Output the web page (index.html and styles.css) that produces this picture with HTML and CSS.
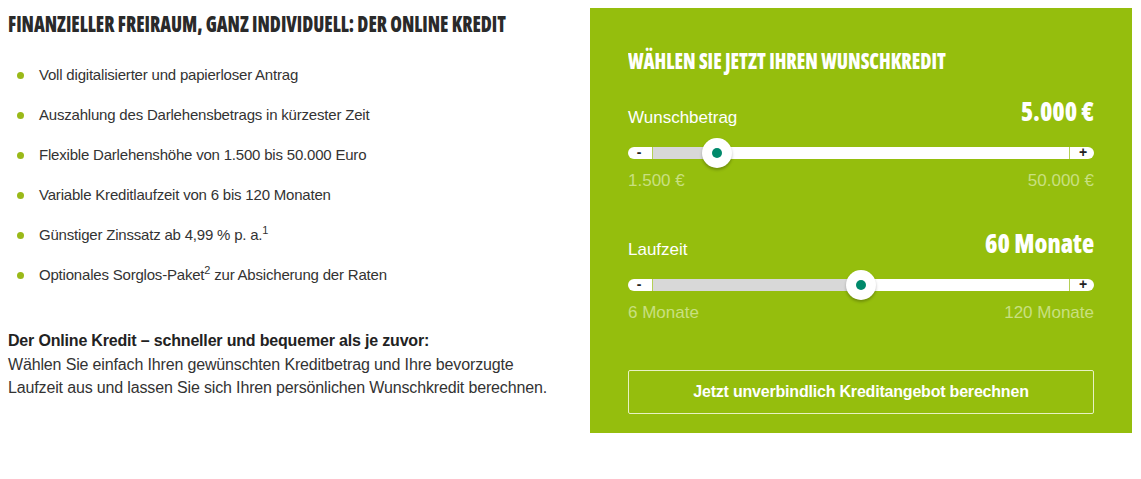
FILE: index.html
```html
<!DOCTYPE html>
<html lang="de">
<head>
<meta charset="utf-8">
<title>Online Kredit</title>
<link rel="stylesheet" href="styles.css">
</head>
<body>
<div class="page">
  <section class="info">
    <h1 class="headline"><span class="squeeze squeeze-left">Finanzieller Freiraum, ganz individuell: Der Online Kredit</span></h1>
    <ul class="benefits">
      <li>Voll digitalisierter und papierloser Antrag</li>
      <li>Auszahlung des Darlehensbetrags in kürzester Zeit</li>
      <li>Flexible Darlehenshöhe von 1.500 bis 50.000 Euro</li>
      <li>Variable Kreditlaufzeit von 6 bis 120 Monaten</li>
      <li>Günstiger Zinssatz ab 4,99 % p. a.<sup>1</sup></li>
      <li>Optionales Sorglos-Paket<sup>2</sup> zur Absicherung der Raten</li>
    </ul>
    <p class="intro"><strong>Der Online Kredit – schneller und bequemer als je zuvor:</strong><br>Wählen Sie einfach Ihren gewünschten Kreditbetrag und Ihre bevorzugte Laufzeit aus und lassen Sie sich Ihren persönlichen Wunschkredit berechnen.</p>
  </section>
  <aside class="calc">
    <h2 class="calc-title"><span class="squeeze squeeze-left squeeze-title">Wählen Sie jetzt Ihren Wunschkredit</span></h2>
    <div class="field field-amount">
      <div class="field-head">
        <span class="field-label">Wunschbetrag</span>
        <span class="field-value"><span class="squeeze squeeze-right">5.000 €</span></span>
      </div>
      <div class="slider">
        <span class="step step-minus">-</span>
        <div class="rail">
          <div class="fill" style="width: 15.4%"></div>
          <span class="thumb" style="left: 15.4%"></span>
        </div>
        <span class="step step-plus">+</span>
      </div>
      <div class="range"><span>1.500 €</span><span>50.000 €</span></div>
    </div>
    <div class="field field-term">
      <div class="field-head">
        <span class="field-label">Laufzeit</span>
        <span class="field-value"><span class="squeeze squeeze-right">60 Monate</span></span>
      </div>
      <div class="slider">
        <span class="step step-minus">-</span>
        <div class="rail">
          <div class="fill" style="width: 50.1%"></div>
          <span class="thumb" style="left: 50.1%"></span>
        </div>
        <span class="step step-plus">+</span>
      </div>
      <div class="range"><span>6 Monate</span><span>120 Monate</span></div>
    </div>
    <a class="cta" href="#">Jetzt unverbindlich Kreditangebot berechnen</a>
  </aside>
</div>
</body>
</html>
```

FILE: styles.css
```css
* { box-sizing: border-box; }
html, body { margin: 0; padding: 0; background: #fff; }
body {
  font-family: "Liberation Sans", Arial, sans-serif;
  color: #333;
}
.page {
  display: flex;
  align-items: flex-start;
  padding: 8px 9px 0 8px;
  gap: 26px;
}
.info { width: 556px; flex: none; }

/* condensed display type */
.squeeze {
  display: inline-block;
  white-space: nowrap;
  font-family: "Open Sans", sans-serif;
  font-weight: 800;
  font-stretch: 75%;
  text-transform: uppercase;
  transform: scaleX(0.855);
}
.squeeze-left { transform-origin: left center; }
.squeeze-title { transform: scaleX(0.872); }
.squeeze-right {
  transform-origin: right center;
  text-transform: none;
  transform: scaleX(0.965);
}

.headline {
  margin: 0;
  height: 30px;
  font-size: 22px;
  line-height: 30px;
  color: #2a2a2a;
}
.benefits {
  list-style: none;
  margin: 27px 0 0 0;
  padding: 0;
}
.benefits li {
  position: relative;
  padding-left: 31px;
  font-size: 15px;
  letter-spacing: -0.2px;
  line-height: 20px;
  margin-bottom: 20px;
  color: #333;
}
.benefits li::before {
  content: "";
  position: absolute;
  left: 9px;
  top: 7px;
  width: 7px;
  height: 7px;
  border-radius: 50%;
  background: #9ab919;
}
.benefits sup { font-size: 11px; line-height: 0; vertical-align: 6px; }
.intro {
  margin: 44px 0 0 0;
  font-size: 16px;
  letter-spacing: -0.15px;
  line-height: 23.5px;
  color: #333;
}
.intro strong { color: #222; letter-spacing: -0.18px; }

.calc {
  flex: 1;
  min-width: 0;
  background: #95be0d;
  padding: 38px 38px 20px 38px;
  color: #fff;
  height: 425px;
}
.calc-title {
  margin: 0;
  font-size: 22px;
  line-height: 28px;
  color: #fff;
}
.field-head {
  display: flex;
  justify-content: space-between;
  align-items: flex-end;
}
.field-amount { margin-top: 22px; }
.field-term { margin-top: 39px; }
.field-label {
  font-size: 17px;
  line-height: 20px;
  margin-bottom: 3px;
  color: #fff;
}
.field-value {
  font-size: 26px;
  line-height: 26px;
  margin-bottom: 6px;
  color: #fff;
}
.slider {
  display: flex;
  align-items: stretch;
  height: 12px;
  margin-top: 16px;
  background: #fff;
  border-radius: 6px;
}
.step {
  flex: none;
  width: 25px;
  font-size: 14px;
  font-weight: 700;
  line-height: 10px;
  color: #222;
  text-align: center;
}
.step-minus { border-right: 1px solid #b4cf56; padding-right: 2px; }
.step-plus { border-left: 1px solid #b4cf56; padding-left: 2px; }
.rail { position: relative; flex: 1; }
.fill { height: 100%; background: #d8d8d8; }
.thumb {
  position: absolute;
  top: 50%;
  width: 30px;
  height: 30px;
  margin: -15px 0 0 -15px;
  border-radius: 50%;
  background: #fff;
  box-shadow: 0 2px 3px rgba(0,0,0,0.25);
}
.thumb::after {
  content: "";
  position: absolute;
  left: 10px;
  top: 10px;
  width: 10px;
  height: 10px;
  border-radius: 50%;
  background: #00896b;
}
.range {
  display: flex;
  justify-content: space-between;
  margin-top: 12px;
  font-size: 17px;
  line-height: 20px;
  color: #c9e080;
}
.cta {
  display: block;
  margin-top: 47px;
  height: 44px;
  border: 1px solid #e8f2c4;
  border-radius: 2px;
  text-align: center;
  line-height: 42px;
  font-size: 16px;
  letter-spacing: -0.2px;
  font-weight: 700;
  color: #fff;
  text-decoration: none;
}
```
